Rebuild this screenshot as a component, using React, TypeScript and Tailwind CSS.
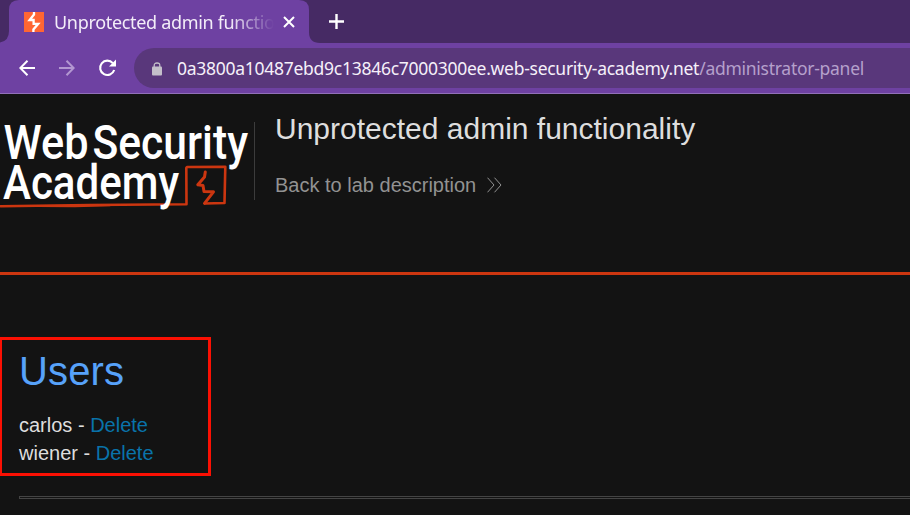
import React from "react";

function BrowserTab() {
  return (
    <div className="relative flex h-[43px] bg-[#462a64]">
      <svg className="absolute left-0 top-0" width="322" height="43" viewBox="0 0 322 43">
        <path d="M0 43V42.5Q9 41 9 31V10Q9 0 19 0H299Q309 0 309 10V32Q309 43 320 43Z" fill="#6e41a2" />
      </svg>
      <div className="relative flex w-full items-center pl-6">
        <svg width="20" height="20" viewBox="0 0 20 20" className="shrink-0">
          <path d="M0 0H20V20H0Z" fill="#ff6633" />
          <path d="M10 0V2.5L5.6 8H9.6V11.8H14.2L9.4 17.5V20" fill="none" stroke="#fff" strokeWidth="2.3" />
        </svg>
        <div className="ml-[10px] w-[220px] overflow-hidden whitespace-nowrap font-['Noto_Sans',sans-serif] text-[18px] leading-[26px] text-[#f3edf8] [mask-image:linear-gradient(to_right,black_80%,transparent_100%)]">
          <span className="tracking-[-0.32px]">Unprotected admin functionality</span>
        </div>
        <svg className="ml-[9px] shrink-0" width="12" height="12" viewBox="0 0 12 12" stroke="#fff" strokeWidth="2">
          <path d="M1 1L11 11M11 1L1 11" />
        </svg>
        <svg className="ml-[34px] shrink-0" width="15" height="15" viewBox="0 0 15 15" stroke="#fff" strokeWidth="2.4">
          <path d="M7.5 0V15M0 7.5H15" />
        </svg>
      </div>
    </div>
  );
}

function Toolbar() {
  return (
    <div className="flex h-[51px] items-center border-b border-[#9170b9] bg-[#6e41a2] pl-[19px]">
      <svg width="16" height="16" viewBox="0 0 16 16" fill="none" stroke="#fff" strokeWidth="2">
        <path d="M16 8H1.5M8.5 .8L1.3 8L8.5 15.2" />
      </svg>
      <svg className="ml-6" width="16" height="16" viewBox="0 0 16 16" fill="none" stroke="#b397d1" strokeWidth="2">
        <path d="M0 8H14.5M7.5 .8L14.7 8L7.5 15.2" />
      </svg>
      <svg className="ml-[23px]" width="18" height="18" viewBox="0 0 18 18">
        <path d="M14.8 4.1A7.2 7.2 0 1 0 16.2 11" fill="none" stroke="#fff" strokeWidth="2.1" />
        <path d="M18 .5V7.5H11Z" fill="#fff" />
      </svg>
      <div className="ml-[18px] flex h-10 flex-1 items-center rounded-l-full bg-[#59377b] pl-[18px]">
        <svg className="mt-[2px]" width="10" height="14" viewBox="0 0 10 14">
          <path d="M2.2 6V3.5Q2.2 1 5 1T7.8 3.5V6" fill="none" stroke="#c4bfca" strokeWidth="1.3" />
          <rect y="4.5" width="10" height="9" rx="1" fill="#c4bfca" />
        </svg>
        <div className="ml-[15px] whitespace-nowrap font-['Noto_Sans',sans-serif] text-[17.5px] leading-6 tracking-[-0.27px] text-[#b5a0cb]">
          <span className="text-[#f5f0f9]">0a3800a10487ebd9c13846c7000300ee.web-security-academy.net</span>
          <span>/administrator-panel</span>
        </div>
      </div>
    </div>
  );
}

function AcademyLogo() {
  return (
    <svg className="shrink-0" width="254" height="100" viewBox="0 110 254 100">
      <g fill="none" stroke="#cc3610" strokeLinecap="round" strokeLinejoin="round">
        <path d="M1 206.2L90 205L186.5 204.2L186.3 168L187 167L225.3 166.7L224.5 203L205 203.5" strokeWidth="2.6" />
        <path d="M0 206L75 206.6L110 205.5" strokeWidth="1.5" />
        <path d="M205.3 172L204.5 177L197.8 184.8L203 185.5L204 191.5L213.5 191.8L204.5 203.3" strokeWidth="3" />
      </g>
      <g fill="#fff" className="font-['Roboto',sans-serif] text-[47.5px] font-medium">
        <text x="3.5" y="158.6" textLength="85" lengthAdjust="spacingAndGlyphs">Web</text>
        <text x="92.5" y="158.6" textLength="155.5" lengthAdjust="spacingAndGlyphs">Security</text>
        <text x="3" y="199.4" textLength="176" lengthAdjust="spacingAndGlyphs">Academy</text>
      </g>
    </svg>
  );
}

export default function App() {
  return (
    <div className="h-[515px] w-[910px] overflow-hidden bg-[#131313] font-['Liberation_Sans',sans-serif]">
      <BrowserTab />
      <Toolbar />
      <header className="flex h-[181px] border-b-[3px] border-[#cc3610] pt-4">
        <AcademyLogo />
        <div className="mt-3 h-[78px] w-px bg-[#3c3c3c]" />
        <div className="ml-5 pt-px">
          <h1 className="whitespace-nowrap text-[30px] leading-9 text-[#dedede]">Unprotected admin functionality</h1>
          <div className="mt-[25px] flex items-center text-[20px] leading-[26px] text-[#929292]">
            <span className="whitespace-nowrap">Back to lab description</span>
            <svg className="ml-[11px]" width="15" height="16" viewBox="0 0 15 16" fill="none" stroke="#929292">
              <path d="M.5 .7L7 8L.5 15.3M7.5 .7L14 8L7.5 15.3" />
            </svg>
          </div>
        </div>
      </header>
      <main className="pt-[62px]">
        <section className="h-[139px] w-[211px] border-[3px] border-l-2 border-[#fb1003] pl-[17px] pt-[7px]">
          <h2 className="text-[40px] leading-[48px] tracking-[0.15px] text-[#57a2fa]">Users</h2>
          <div className="mt-4 text-[20px] leading-7 text-[#dedede]">
            <p>carlos - <a className="text-[#0973aa]">Delete</a></p>
            <p>wiener - <a className="text-[#0973aa]">Delete</a></p>
          </div>
        </section>
        <div className="ml-[19px] mt-5 h-[3px] border-y border-l border-[#444]" />
      </main>
    </div>
  );
}
